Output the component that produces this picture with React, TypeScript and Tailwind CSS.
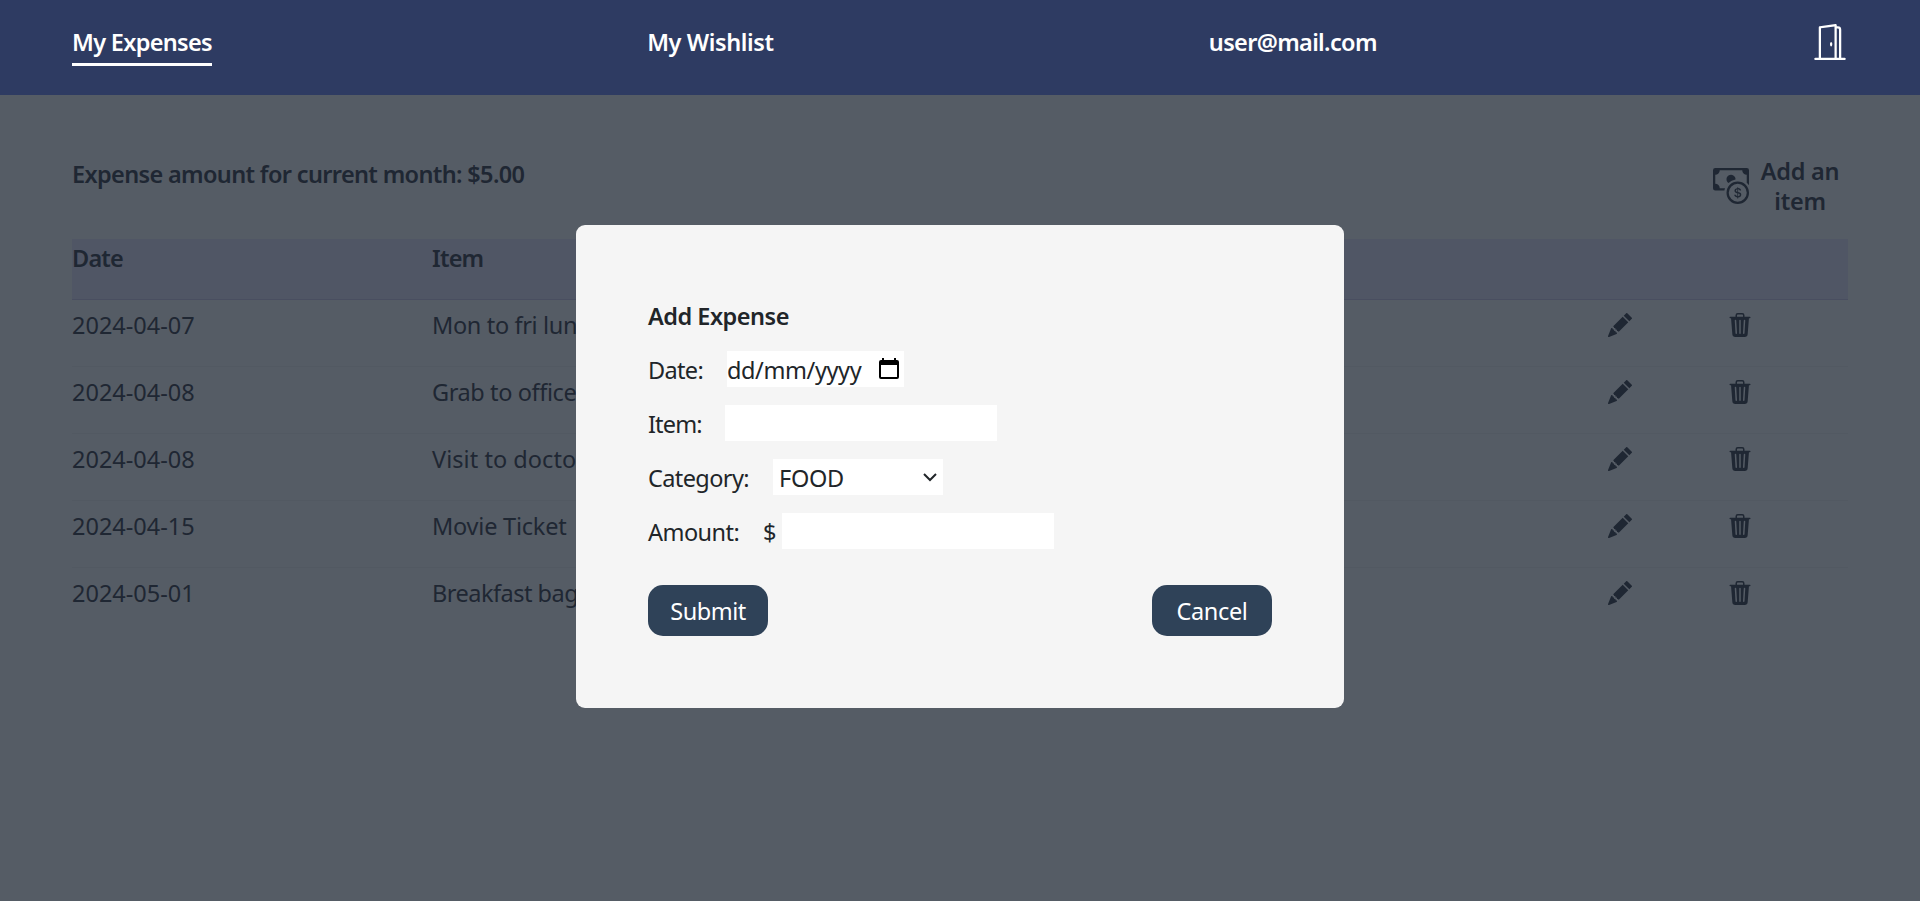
import { BsDoorOpen, BsCashCoin, BsPencilFill, BsTrash3Fill } from "react-icons/bs";

const rows = [
  { date: "2024-04-07", item: "Mon to fri lunch", tracking: "tracking-[-0.35px]" },
  { date: "2024-04-08", item: "Grab to office", tracking: "tracking-[-0.4px]" },
  { date: "2024-04-08", item: "Visit to doctor", tracking: "tracking-[0.05px]" },
  { date: "2024-04-15", item: "Movie Ticket", tracking: "tracking-[-0.22px]" },
  { date: "2024-05-01", item: "Breakfast bagel", tracking: "tracking-[-0.5px]" },
];

function Header() {
  return (
    <header className="flex h-[95px] items-start justify-between bg-[#2e3b62] px-[72px] pt-6 font-semibold text-white">
      <a className="h-[42px] border-b-[3px] border-white leading-[36px] tracking-[-0.68px]">My Expenses</a>
      <a className="leading-[36px] tracking-[-0.4px]">My Wishlist</a>
      <a className="leading-[36px] tracking-[-0.66px]">user@mail.com</a>
      <BsDoorOpen size={36} />
    </header>
  );
}

function ExpenseTable() {
  return (
    <div>
      <div className="flex h-[61px] border-b border-[#494e60] bg-[#505665] pt-1 font-semibold leading-[30px] tracking-[-0.8px]">
        <div className="w-[360px]">Date</div>
        <div>Item</div>
      </div>
      {rows.map((r) => (
        <div key={r.date + r.item} className="flex h-[67px] items-start border-b border-[#525962] pt-[10px] leading-[30px] last:border-b-0">
          <div className="w-[360px]">{r.date}</div>
          <div className={`grow whitespace-nowrap ${r.tracking}`}>{r.item}</div>
          <BsPencilFill size={24} className="mt-[3px]" />
          <BsTrash3Fill size={24} className="mt-[3px] mr-[96px] ml-[96px]" />
        </div>
      ))}
    </div>
  );
}

function AddExpenseDialog() {
  return (
    <div className="absolute left-[576px] top-[225px] h-[483px] w-[768px] rounded-[9px] bg-[#f5f5f5] p-[72px] pt-[73px] text-[#212529]">
      <h2 className="h-[53px] font-semibold leading-[36px] tracking-[-0.5px]">Add Expense</h2>
      <div className="flex h-[54px] items-start leading-[36px]">
        <label className="w-[79px] pt-px tracking-[-0.65px]">Date:</label>
        <div className="flex h-9 w-[177px] items-start bg-white">
          <span className="w-[152px] pt-px tracking-[-0.4px]">dd/mm/yyyy</span>
          <svg width="20" height="21" viewBox="0 0 20 21" className="mt-[7px]">
            <path d="M3 0h2v2h10V0h2v2h1q2 0 2 2v15q0 2-2 2H2q-2 0-2-2V4q0-2 2-2h1zM2 7v12h16V7z" fill="#000" />
          </svg>
        </div>
      </div>
      <div className="flex h-[54px] items-start leading-[36px]">
        <label className="w-[77px] pt-px tracking-[-0.85px]">Item:</label>
        <div className="h-9 w-[272px] bg-white" />
      </div>
      <div className="flex h-[54px] items-start leading-[36px]">
        <label className="w-[125px] pt-px tracking-[-0.6px]">Category:</label>
        <div className="flex h-9 w-[170px] items-start justify-between bg-white px-[6px]">
          <span className="pt-px tracking-[-0.3px]">FOOD</span>
          <svg width="14" height="9" viewBox="0 0 14 9" className="mt-[14px]" fill="none" stroke="#212529" strokeWidth="2">
            <path d="M1 1l6 6 6-6" />
          </svg>
        </div>
      </div>
      <div className="flex h-[72px] items-start leading-[36px]">
        <label className="w-[115px] pt-px tracking-[-0.55px]">Amount:</label>
        <span className="w-[19px] pt-px">$</span>
        <div className="h-9 w-[272px] bg-white" />
      </div>
      <div className="flex justify-between text-white">
        <button className="h-[51px] w-[120px] rounded-[15px] bg-[#2f4258] pt-[3px] tracking-[-0.5px]">Submit</button>
        <button className="h-[51px] w-[120px] rounded-[15px] bg-[#2f4258] pt-[3px] tracking-[-0.35px]">Cancel</button>
      </div>
    </div>
  );
}

export default function App() {
  return (
    <div className="relative h-[901px] w-[1920px] overflow-hidden bg-[#555c65] font-['Noto_Sans',sans-serif] text-[23.5px] text-[#1f2733]">
      <Header />
      <main className="px-[72px] pt-[62px]">
        <div className="flex h-[82px] items-start justify-between font-semibold leading-[30px]">
          <div className="pt-[2px] tracking-[-0.65px]">Expense amount for current month: $5.00</div>
          <div className="flex items-start">
            <BsCashCoin size={36} className="mt-[11px]" />
            <div className="-mt-px w-[99px] pl-[3px] text-center tracking-[-0.3px]">Add an<br />item</div>
          </div>
        </div>
        <ExpenseTable />
      </main>
      <AddExpenseDialog />
    </div>
  );
}
